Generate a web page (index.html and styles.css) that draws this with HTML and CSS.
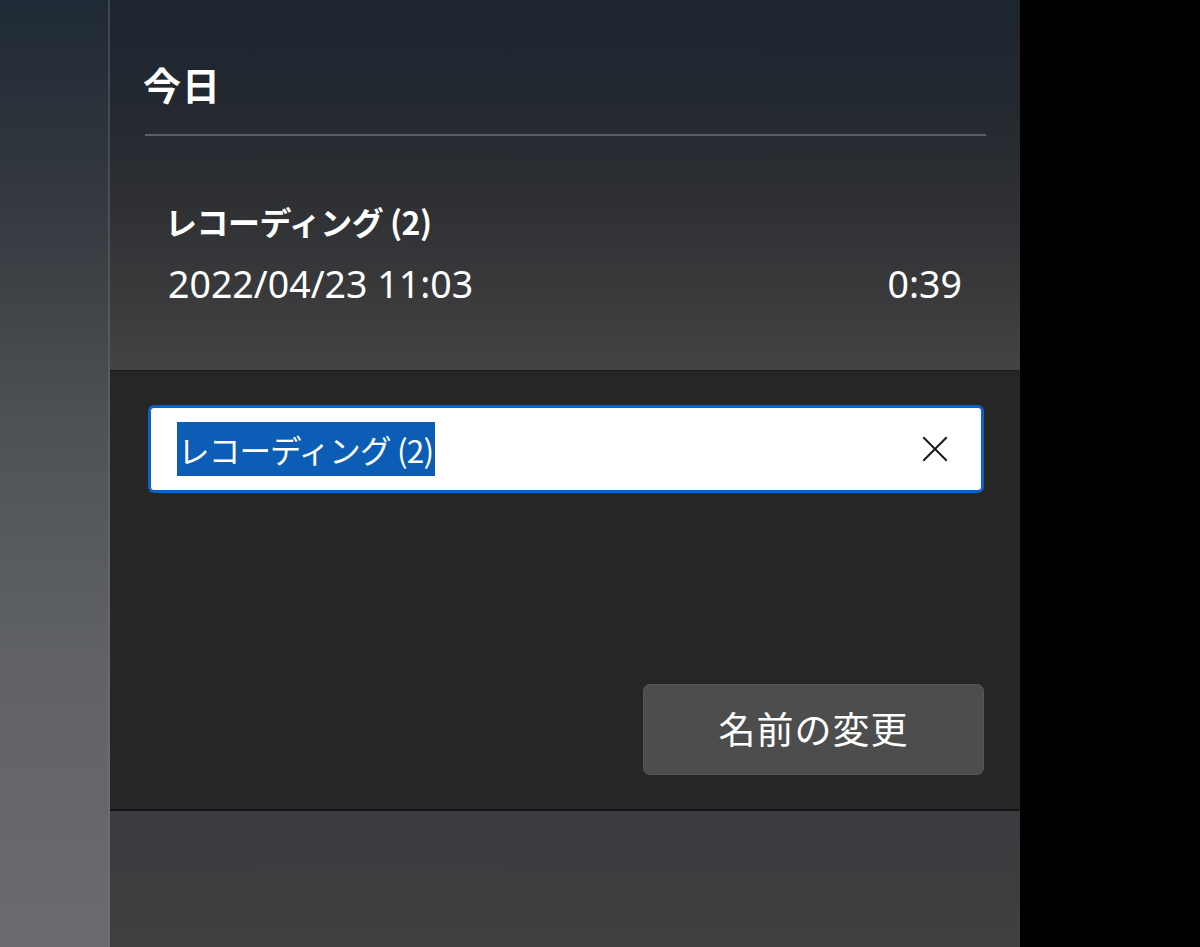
FILE: index.html
```html
<!DOCTYPE html>
<html lang="ja">
<head>
<meta charset="utf-8">
<title>ボイスレコーダー</title>
<link rel="stylesheet" href="styles.css">
</head>
<body>
<div class="screen">
  <div class="side"></div>
  <div class="main">
    <section class="list">
      <h2 class="group">今日</h2>
      <div class="divider"></div>
      <div class="item">
        <div class="item-title">レコーディング (2)</div>
        <div class="item-meta">
          <span class="date">2022/04/23 11:03</span>
          <span class="dur">0:39</span>
        </div>
      </div>
    </section>
    <section class="dialog">
      <div class="field">
        <span class="sel">レコーディング (2)</span>
        <svg class="clear" viewBox="0 0 26 26" width="26" height="26" aria-hidden="true">
          <path d="M2 2 L24 24 M24 2 L2 24" stroke="#1a1a1a" stroke-width="2" fill="none" stroke-linecap="square"/>
        </svg>
      </div>
      <div class="actions">
        <button class="btn">名前の変更</button>
      </div>
    </section>
    <section class="below"></section>
  </div>
  <div class="black"></div>
</div>
</body>
</html>
```

FILE: styles.css
```css
html, body {
  margin: 0;
  padding: 0;
  background: #000;
}
body {
  font-family: "Noto Sans", "Noto Sans CJK JP", sans-serif;
  color: #fff;
}
.screen {
  display: flex;
  width: 1200px;
  height: 947px;
}
.side {
  width: 110px;
  flex: none;
  background: linear-gradient(180deg, #1f2a36 0%, #33383e 20%, #4e5155 45%, #606266 70%, #6a6b6e 100%);
  box-shadow: inset -2px 0 0 rgba(120,120,120,0.35);
}
.main {
  width: 910px;
  flex: none;
  display: flex;
  flex-direction: column;
}
.black {
  flex: 1;
  background: #000;
}
.list {
  height: 370px;
  flex: none;
  box-sizing: border-box;
  padding: 58px 34px 0 35px;
  background: linear-gradient(180deg, #1d2530 0%, #222830 25%, #2c2e32 50%, #3a3a3c 80%, #444446 100%);
}
.group {
  margin: 0 0 0 -2px;
  font-family: "Noto Sans CJK JP", sans-serif;
  font-size: 38px;
  font-weight: 700;
  line-height: 52px;
  letter-spacing: 1px;
}
.divider {
  height: 2px;
  background: #5c5e62;
  margin-top: 24px;
}
.item {
  padding: 62px 24px 0 20px;
}
.item-title {
  font-family: "Noto Sans CJK JP", sans-serif;
  font-size: 32px;
  font-weight: 700;
  line-height: 46px;
  letter-spacing: -0.5px;
}
.item-meta {
  display: flex;
  justify-content: space-between;
  align-items: baseline;
  margin-top: 17px;
  padding-left: 3px;
  font-size: 37.5px;
  line-height: 46px;
}
.dialog {
  height: 441px;
  flex: none;
  box-sizing: border-box;
  background: #262626;
  border-top: 1px solid #1a1a1a;
  border-bottom: 2px solid #151515;
  padding: 34px 36px 34px 38px;
  display: flex;
  flex-direction: column;
  justify-content: space-between;
}
.field {
  height: 88px;
  box-sizing: border-box;
  background: #fff;
  border: 3px solid #0a62c4;
  border-radius: 6px;
  display: flex;
  align-items: center;
  justify-content: space-between;
  padding: 0 33px 0 26px;
}
.sel {
  background: #0b5db6;
  color: #fff;
  font-family: "Noto Sans CJK JP", sans-serif;
  font-size: 31.5px;
  line-height: 54px;
  letter-spacing: -0.8px;
  padding: 0 2px 0 1px;
}
.clear {
  flex: none;
}
.actions {
  display: flex;
  justify-content: flex-end;
}
.btn {
  width: 341px;
  height: 91px;
  border: 1px solid #565656;
  border-radius: 7px;
  background: #4d4d4d;
  color: #fff;
  font-family: "Noto Sans CJK JP", sans-serif;
  font-size: 37px;
  letter-spacing: 1px;
  padding: 0 0 4px 0;
}
.below {
  flex: 1;
  background: linear-gradient(180deg, #3a3b3e 0%, #404042 100%);
}
```
